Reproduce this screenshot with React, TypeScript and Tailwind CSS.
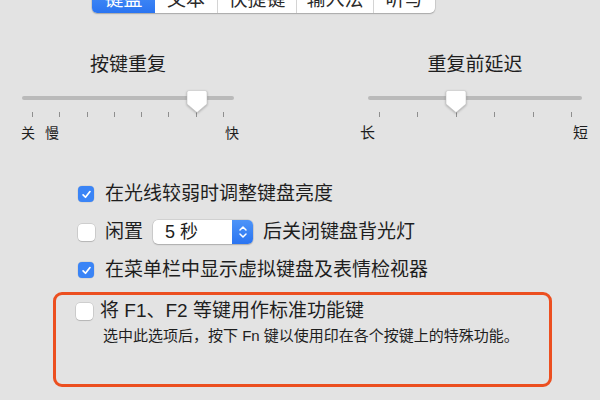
import React from 'react';

const font = "font-['Liberation_Sans','Noto_Sans_CJK_SC',sans-serif]";

const tabs = [
  { label: '键盘', w: 'w-[63px]', active: true },
  { label: '文本', w: 'w-[62px]' },
  { label: '快捷键', w: 'w-[79px]' },
  { label: '输入法', w: 'w-[77px]' },
  { label: '听写', w: 'w-[62px]' },
];

const Thumb = () => (
  <svg width="24" height="25" viewBox="0 0 24 25" className="drop-shadow-[0_1px_1px_rgba(0,0,0,0.25)]">
    <path
      d="M2 3.5 Q2 1.5 4 1.5 H20 Q22 1.5 22 3.5 V15 L12 23.5 L2 15 Z"
      fill="#ffffff"
      stroke="#c4c4c4"
      strokeWidth="0.6"
    />
  </svg>
);

const Check = ({ checked }: { checked?: boolean }) =>
  checked ? (
    <div className="w-[16px] h-[16px] rounded-[4px] bg-[#3a84f6] flex items-center justify-center shrink-0 shadow-[0_0_0_0.5px_rgba(0,0,0,0.1)]">
      <svg width="11" height="11" viewBox="0 0 12 12">
        <path d="M2.3 6.4 L4.9 9 L9.8 2.8" fill="none" stroke="#fff" strokeWidth="1.9" strokeLinecap="round" strokeLinejoin="round" />
      </svg>
    </div>
  ) : (
    <div className="w-[17px] h-[17px] rounded-[4px] bg-white shrink-0 shadow-[0_0_0_0.5px_rgba(0,0,0,0.18),0_1px_1px_rgba(0,0,0,0.12)]" />
  );

const App = () => {
  return (
    <div className={`w-[600px] h-[400px] bg-[#e3e3e3] overflow-hidden text-[#1e1e1e] ${font}`}>
      {/* Tabs */}
      <div className="flex ml-[92px] mt-[-15px] h-[28px] w-fit rounded-[5px] bg-white shadow-[0_0_0_0.5px_rgba(0,0,0,0.15),0_1px_1.5px_rgba(0,0,0,0.2)] overflow-hidden">
        {tabs.map((t, i) => (
          <div
            key={t.label}
            className={`${t.w} h-full flex items-center justify-center text-[19px] leading-none ${
              t.active
                ? 'bg-gradient-to-b from-[#4d94f8] to-[#2a74f1] text-white'
                : 'text-[#2a2a2a]'
            } ${i > 1 ? 'border-l border-[#d4d4d4]' : ''}`}
          >
            {t.label}
          </div>
        ))}
      </div>

      {/* Sliders */}
      <div className="flex mt-[40px]">
        <div className="ml-[21px] w-[218px] flex flex-col">
          <div className="text-[19px] leading-[24px] text-center pr-[4px]">按键重复</div>
          <div className="relative ml-[1px] w-[212px] h-[4px] mt-[19px] rounded-full bg-[#bababa]">
            <div className="absolute left-[163px] top-[-7px]">
              <Thumb />
            </div>
          </div>
          <div className="ml-[1px] w-[212px] flex justify-between pl-[10px] pr-[10px] mt-[12px] h-[5px]">
            {Array.from({ length: 8 }).map((_, i) => (
              <div key={i} className="w-[1px] h-[5px] bg-[#8e8e8e]" />
            ))}
          </div>
          <div className="flex text-[14px] leading-[18px] mt-[7px]">
            <span>关</span>
            <span className="ml-[10px]">慢</span>
            <span className="ml-auto">快</span>
          </div>
        </div>

        <div className="ml-[121px] w-[228px] flex flex-col">
          <div className="text-[19px] leading-[24px] text-center pl-[2px]">重复前延迟</div>
          <div className="relative ml-[8px] w-[214px] h-[4px] mt-[19px] rounded-full bg-[#bababa]">
            <div className="absolute left-[76px] top-[-7px]">
              <Thumb />
            </div>
          </div>
          <div className="ml-[8px] w-[214px] flex justify-between pl-[11px] pr-[10px] mt-[12px] h-[5px]">
            {Array.from({ length: 6 }).map((_, i) => (
              <div key={i} className="w-[1px] h-[5px] bg-[#8e8e8e]" />
            ))}
          </div>
          <div className="flex justify-between text-[15px] leading-[18px] mt-[7px]">
            <span>长</span>
            <span>短</span>
          </div>
        </div>
      </div>

      {/* Options */}
      <div className="flex flex-col gap-[10px] mt-[38px] ml-[78px] text-[19px]">
        <div className="flex items-center h-[28px] gap-[11px]">
          <Check checked />
          <span>在光线较弱时调整键盘亮度</span>
        </div>
        <div className="flex items-center h-[28px]">
          <Check />
          <span className="ml-[10px]">闲置</span>
          <div className="ml-[10px] w-[100px] h-[24px] flex rounded-[5px] bg-white shadow-[0_0_0_0.5px_rgba(0,0,0,0.15),0_1px_1.5px_rgba(0,0,0,0.18)] overflow-hidden">
            <span className="flex-1 pl-[12px] leading-[24px] text-[18px]">5 秒</span>
            <div className="w-[21px] h-full bg-gradient-to-b from-[#4d94f8] to-[#2a74f1] flex items-center justify-center">
              <svg width="10" height="16" viewBox="0 0 10 16">
                <path d="M2 6 L5 3 L8 6 M2 10 L5 13 L8 10" fill="none" stroke="#fff" strokeWidth="1.5" strokeLinecap="round" strokeLinejoin="round" />
              </svg>
            </div>
          </div>
          <span className="ml-[10px]">后关闭键盘背光灯</span>
        </div>
        <div className="flex items-center h-[28px] gap-[11px]">
          <Check checked />
          <span>在菜单栏中显示虚拟键盘及表情检视器</span>
        </div>
      </div>

      {/* Highlighted option */}
      <div className="mt-[8px] ml-[53px] w-[499px] h-[95px] rounded-[9px] border-[3px] border-[#ec4f20] pl-[20px] pt-[3px]">
        <div className="flex items-center gap-[7px]">
          <Check />
          <span className="text-[19px] leading-[26px]">将 F1、F2 等键用作标准功能键</span>
        </div>
        <div className="ml-[27px] text-[15px] leading-[22px] mt-[1px]">
          选中此选项后，按下 Fn 键以使用印在各个按键上的特殊功能。
        </div>
      </div>
    </div>
  );
};

export default App;
